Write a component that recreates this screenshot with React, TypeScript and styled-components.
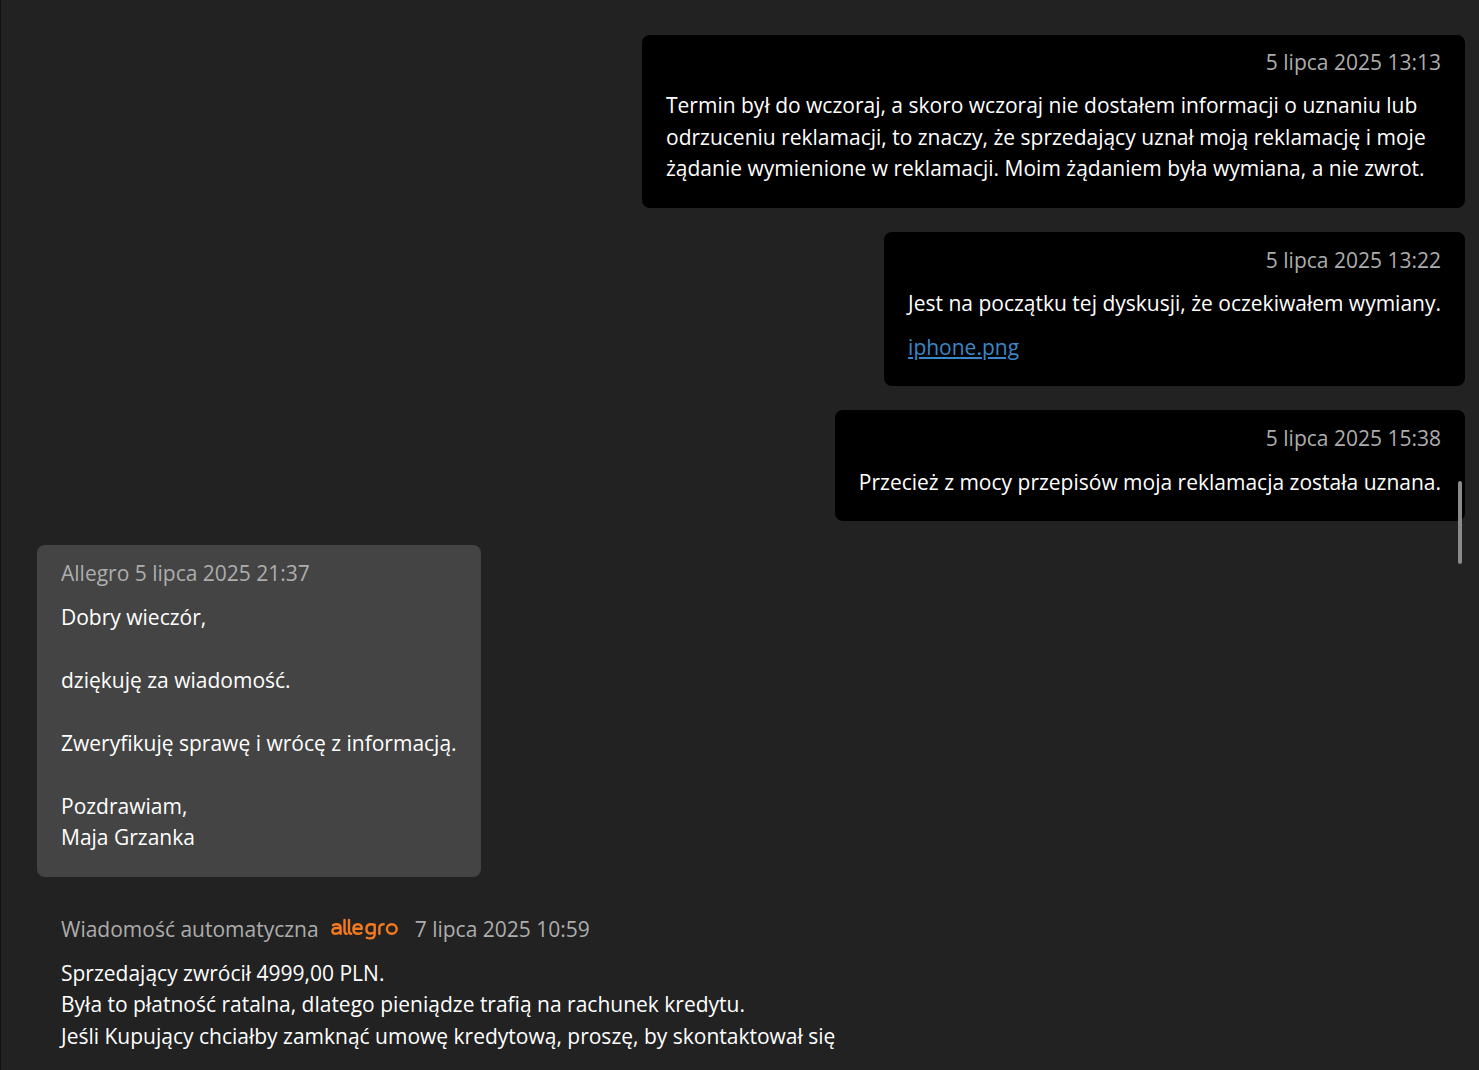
import { FC } from 'react';
import styled, { createGlobalStyle } from 'styled-components';

const GlobalStyle = createGlobalStyle`
    html, body {
        margin: 0;
        height: 100%;
        overflow: hidden;
        background-color: #222222;
    }
    body {
        font-family: "Open Sans", "Noto Sans", sans-serif;
        font-size: 21px;
        line-height: 31.5px;
        color: #ffffff;
    }
`;

const Page = styled.div`
    position: relative;
    box-sizing: border-box;
    height: 1070px;
    overflow: hidden;
    border-left: 1px solid #111111;
    background-color: #222222;
`;
const Thread = styled.div`
    display: flex;
    flex-direction: column;
    gap: 24px;
    padding: 34.85px 14px 0 36px;
`;
const Bubble = styled.div<{ $kind: 'mine' | 'agent' | 'auto'; $bottom?: number }>`
    box-sizing: border-box;
    max-width: 823px;
    padding: 12.5px 24px ${(p) => p.$bottom ?? 23.5}px;
    border-radius: 8px;
    align-self: ${(p) => (p.$kind === 'mine' ? 'flex-end' : 'flex-start')};
    background-color: ${(p) =>
        p.$kind === 'mine' ? '#000000' : p.$kind === 'agent' ? '#444444' : 'transparent'};
`;
const Meta = styled.div<{ $right?: boolean; $gap?: number }>`
    display: flex;
    align-items: center;
    justify-content: ${(p) => (p.$right ? 'flex-end' : 'flex-start')};
    margin-bottom: ${(p) => p.$gap ?? 11.4}px;
    color: #adadad;
`;
const Body = styled.div`
    white-space: pre-line;
`;
const FileLink = styled.a`
    display: block;
    margin: 12.75px 0 -0.5px;
    color: #3a87c8;
    text-decoration: underline;
`;
const AllegroLogo = styled.svg`
    display: block;
    flex: none;
    width: 68px;
    height: 24px;
    margin: 1.5px 16px 0 12px;
    fill: none;
    stroke: #f5791f;
    stroke-width: 2.4;
    stroke-linecap: round;
    stroke-linejoin: round;
`;
const ScrollThumb = styled.div`
    position: absolute;
    top: 481px;
    left: 1457px;
    width: 4px;
    height: 83px;
    border-radius: 2px;
    background-color: #8a8a8a;
`;

const Logo: FC = () => (
    <AllegroLogo viewBox="0 0 68 24" aria-label="allegro">
        {/* a */}
        <path d="M2 7.200c1-.7 2.200-1 3.400-1 2.600 0 4.200 1.200 4.200 3.600v6M9.400 10H5.400C3 10 1.400 10.900 1.400 12.900s1.500 2.900 3.500 2.900c1.900 0 3.500-.9 4.500-2.300" />
        {/* l l */}
        <path d="M13.500 2v10.800c0 2 .6 3 2.200 3" />
        <path d="M18 2v10.800c0 2 .6 3 2.200 3" />
        {/* e */}
        <path d="M22.400 10.800h8.400c0-3-1.500-4.600-4-4.600-2.700 0-4.400 1.900-4.400 4.800 0 3 1.800 4.800 4.700 4.800 1.200 0 2.300-.3 3.200-.8" />
        {/* g */}
        <path d="M43.700 6.800v9.200c0 2.900-1.700 4.400-4.600 4.400-1.200 0-2.300-.2-3.300-.7M43.700 7.400c-1-.8-2.100-1.200-3.500-1.200-2.900 0-4.800 1.900-4.800 4.700 0 2.800 1.800 4.600 4.500 4.600 1.600 0 2.900-.6 3.800-1.700" />
        {/* r */}
        <path d="M48.400 15.800V9.900c0-2.400 1.400-3.700 4.300-3.700" />
        {/* o */}
        <ellipse cx="60.800" cy="11" rx="4.900" ry="4.800" />
    </AllegroLogo>
);

export default function App() {
    return (
        <Page>
            <GlobalStyle />
            <Thread>
                <Bubble $kind="mine">
                    <Meta $right>5 lipca 2025 13:13</Meta>
                    <Body>
                        Termin był do wczoraj, a skoro wczoraj nie dostałem informacji o uznaniu lub
                        odrzuceniu reklamacji, to znaczy, że sprzedający uznał moją reklamację i moje
                        żądanie wymienione w reklamacji. Moim żądaniem była wymiana, a nie zwrot.
                    </Body>
                </Bubble>
                <Bubble $kind="mine">
                    <Meta $right>5 lipca 2025 13:22</Meta>
                    <Body>Jest na początku tej dyskusji, że oczekiwałem wymiany.</Body>
                    <FileLink href="#">iphone.png</FileLink>
                </Bubble>
                <Bubble $kind="mine" $bottom={22.85}>
                    <Meta $right $gap={12.4}>5 lipca 2025 15:38</Meta>
                    <Body>Przecież z mocy przepisów moja reklamacja została uznana.</Body>
                </Bubble>
                <Bubble $kind="agent">
                    <Meta $gap={12.56}>Allegro 5 lipca 2025 21:37</Meta>
                    <Body>
                        {'Dobry wieczór,\n\ndziękuję za wiadomość.\n\nZweryfikuję sprawę i wrócę z informacją.\n\nPozdrawiam,\nMaja Grzanka'}
                    </Body>
                </Bubble>
                <Bubble $kind="auto">
                    <Meta $gap={12.6}>
                        Wiadomość automatyczna
                        <Logo />
                        7 lipca 2025 10:59
                    </Meta>
                    <Body>
                        {'Sprzedający zwrócił 4999,00 PLN.\nByła to płatność ratalna, dlatego pieniądze trafią na rachunek kredytu.\nJeśli Kupujący chciałby zamknąć umowę kredytową, proszę, by skontaktował się'}
                    </Body>
                </Bubble>
            </Thread>
            <ScrollThumb />
        </Page>
    );
}
